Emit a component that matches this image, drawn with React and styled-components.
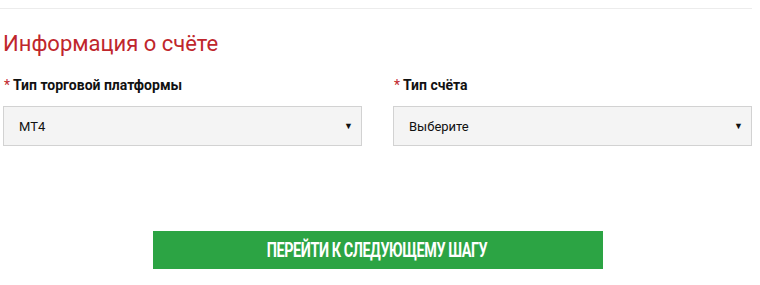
import React from "react";
import styled, { createGlobalStyle } from "styled-components";

const GlobalStyle = createGlobalStyle`
  body {
    margin: 0;
    background: #ffffff;
    font-family: Roboto, "Liberation Sans", Arial, sans-serif;
  }
`;

const Page = styled.div`
  width: 752px;
  padding-top: 8px;
`;

const Divider = styled.hr`
  margin: 0;
  border: 0;
  border-top: 1px solid #ececec;
`;

const Section = styled.div`
  padding-left: 3px;
`;

const Title = styled.h2`
  margin: 22px 0 0;
  font-size: 22px;
  line-height: 26px;
  font-weight: 400;
  color: #bf262c;
`;

const Row = styled.div`
  display: grid;
  grid-template-columns: 1fr 1fr;
  column-gap: 31px;
  margin-top: 20px;
`;

const Field = styled.div`
  display: flex;
  flex-direction: column;
`;

const Label = styled.label`
  font-size: 14px;
  line-height: 17px;
  font-weight: 700;
  color: #111111;
  padding-left: 1px;
  margin-bottom: 12px;
`;

const Star = styled.span`
  color: #c1272d;
  font-weight: 400;
  margin-right: 3px;
`;

const Select = styled.div`
  height: 40px;
  box-sizing: border-box;
  background: #f4f4f4;
  border: 1px solid #d2d2d2;
  display: flex;
  align-items: center;
  justify-content: space-between;
  padding: 0 8px 0 15px;
  font-size: 13px;
  color: #111111;
`;

const Arrow = styled.span`
  font-size: 9px;
  color: #111111;
`;

const Actions = styled.div`
  display: flex;
  justify-content: center;
  margin-top: 85px;
`;

const NextButton = styled.button`
  width: 450px;
  height: 38px;
  border: 0;
  background: #2ca444;
  color: #ffffff;
  cursor: pointer;
  padding: 0;
  display: flex;
  align-items: center;
  justify-content: center;
`;

const ButtonText = styled.span`
  display: inline-block;
  font-family: Roboto, "Liberation Sans", sans-serif;
  font-weight: 700;
  font-size: 20px;
  text-transform: uppercase;
  letter-spacing: -0.6px;
  transform: scaleX(0.72);
  white-space: nowrap;
`;

export default function App() {
  return (
    <>
      <GlobalStyle />
      <Page>
        <Divider />
        <Section>
          <Title>Информация о счёте</Title>
          <Row>
            <Field>
              <Label>
                <Star>*</Star>Тип торговой платформы
              </Label>
              <Select>
                <span>MT4</span>
                <Arrow>▼</Arrow>
              </Select>
            </Field>
            <Field>
              <Label>
                <Star>*</Star>Тип счёта
              </Label>
              <Select>
                <span>Выберите</span>
                <Arrow>▼</Arrow>
              </Select>
            </Field>
          </Row>
          <Actions>
            <NextButton>
              <ButtonText>Перейти к следующему шагу</ButtonText>
            </NextButton>
          </Actions>
        </Section>
      </Page>
    </>
  );
}
